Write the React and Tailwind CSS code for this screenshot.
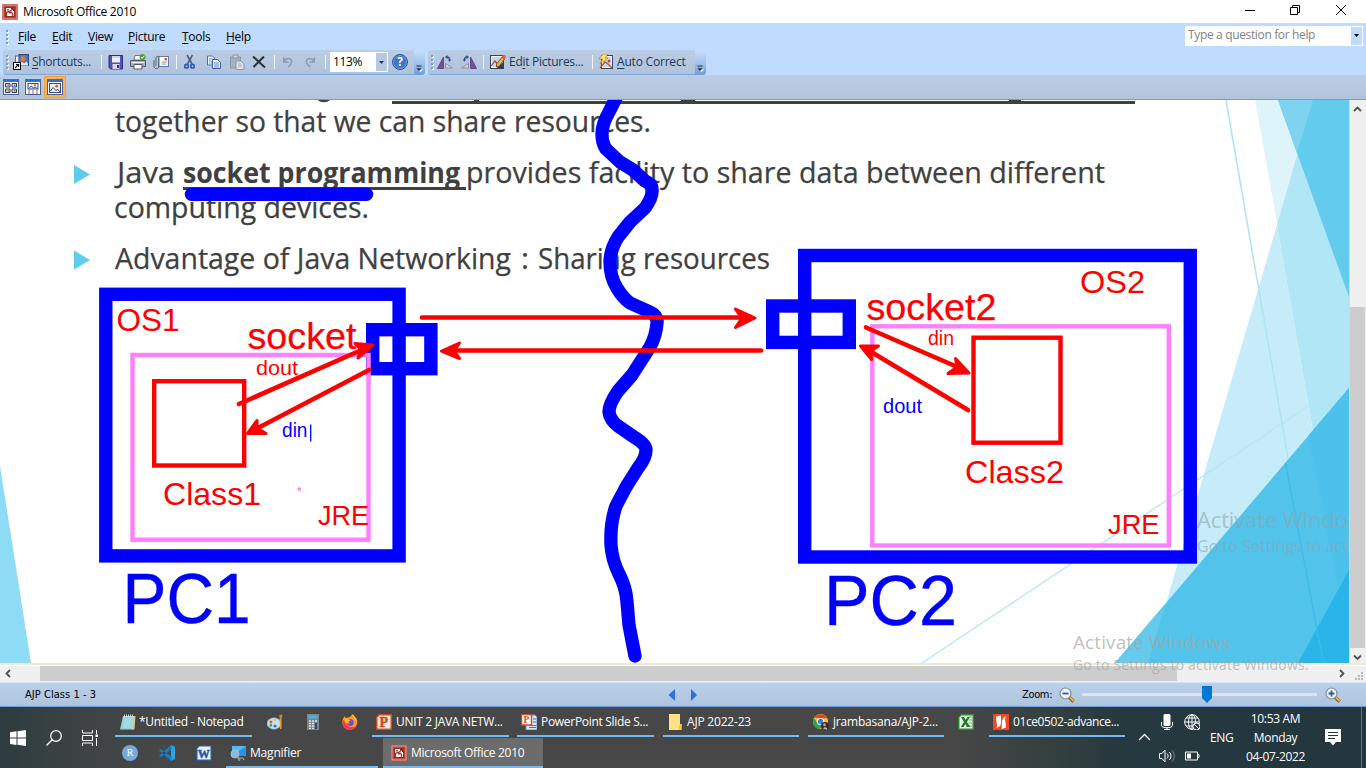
import React from "react";

const UI = "font-['Open_Sans','Noto_Sans',sans-serif]";
const ARIAL = "'Liberation Sans', Arial, sans-serif";
const TREB = "'Open Sans', 'Noto Sans', sans-serif";

function Icon({ children, className = "size-4", box = "0 0 16 16" }) {
  return (
    <svg viewBox={box} className={`shrink-0 ${className}`} fill="none">
      {children}
    </svg>
  );
}

/* ---------- application icons ---------- */

const PictureManager = () => (
  <Icon>
    <rect x="0" y="0" width="16" height="16" rx="1" fill="#b9473e" />
    <rect x="1" y="1" width="14" height="14" stroke="#e9a59d" />
    <rect x="3.5" y="3.5" width="9" height="9" fill="#fff" stroke="#8f2a22" />
    <path d="M4.500 12V8.500l2-1 1.500 1.500 1-1 1.500 1.500V12" stroke="#b5352b" strokeWidth="1.3" />
    <path d="M7 8l4-3.500" stroke="#b5352b" strokeWidth="1.300" />
    <circle cx="6" cy="5.700" r="1" fill="#b5352b" />
    <path d="M9 4.500h2.500V7" stroke="#7d1a14" />
  </Icon>
);

const Shortcuts = () => (
  <Icon>
    <rect x="2.5" y="2" width="9" height="9" fill="#e8eef8" stroke="#4f6fa8" />
    <rect x="6" y="0.5" width="9.500" height="11" fill="#4a76c0" stroke="#2b4c8c" />
    <circle cx="10" cy="4.500" r="2.600" fill="#e8763b" />
    <path d="M6 11l3-3.500 2 2 2.500-2L15 10v1.500H6z" fill="#dfe9f7" />
    <rect x="0.5" y="8.5" width="7" height="7" fill="#fff" stroke="#000" />
    <path d="M2 14l3.5-3.5M3 10.5h2.6v2.6" stroke="#000" strokeWidth="1.1" />
  </Icon>
);

const Save = () => (
  <Icon>
    <path d="M1 1.500h13.500v13.500H2.500L1 13.500z" fill="#5450b8" stroke="#312d86" />
    <rect x="4" y="2" width="8" height="6.500" fill="#eef1fb" />
    <path d="M4 3h8" stroke="#a9b7e6" />
    <rect x="4.500" y="10" width="7" height="5" fill="#d5d9ea" />
    <rect x="9" y="11" width="2" height="3" fill="#312d86" />
  </Icon>
);

const Print = () => (
  <Icon>
    <path d="M4 6l1-4.500h6L12 6z" fill="#fff" stroke="#777" />
    <path d="M.500 6.500h15v6H.5z" fill="#a8adb8" stroke="#555c68" />
    <path d="M1.500 8.500h13" stroke="#f3f4f6" />
    <path d="M4 10.500h8V15H4z" fill="#fff" stroke="#555c68" />
    <circle cx="12.500" cy="3" r="3" fill="#4f9e3f" />
    <path d="M11 3l1.200 1.300 2-2.500" stroke="#fff" />
  </Icon>
);

const Mail = () => (
  <Icon>
    <rect x="5.500" y="2.500" width="10" height="10" fill="#fdfdfe" stroke="#6279a8" />
    <rect x="11.500" y="4" width="2.500" height="2.500" fill="#d9642d" />
    <path d="M8.500 8h5M8.500 10h5" stroke="#7f95c0" />
    <path d="M1 6v6c0 3.500 5 3.500 5 0V4c0-2.300-3-2.300-3 0v7.500" stroke="#5b6472" />
  </Icon>
);

const Cut = () => (
  <Icon>
    <path d="M5 1l5 9M10.500 1l-5 9" stroke="#4f5f80" strokeWidth="1.600" />
    <circle cx="4.500" cy="12.200" r="1.800" stroke="#2858b4" strokeWidth="1.600" />
    <circle cx="10.500" cy="12.200" r="1.800" stroke="#2858b4" strokeWidth="1.600" />
  </Icon>
);

const Copy = () => (
  <Icon>
    <path d="M1.500 2h5l2 2v7h-7z" fill="#f4f8ff" stroke="#4a6cb3" />
    <path d="M3 5h4M3 7h4M3 9h4" stroke="#7b97d0" />
    <path d="M6.500 5.500h5l3 3v6h-8z" fill="#f4f8ff" stroke="#3a5ca6" />
    <path d="M8 9h5M8 11h5M8 13h5" stroke="#5e80c4" />
  </Icon>
);

const Paste = () => (
  <Icon>
    <path d="M1.500 3h10v11h-10z" fill="#a9b1bd" stroke="#8b94a3" />
    <rect x="4" y="1" width="5" height="3" fill="#cfd5de" stroke="#8b94a3" />
    <path d="M7 7h5l3 3v5.500H7z" fill="#dde3ec" stroke="#8f98a7" />
    <path d="M9 10h3M9 12h4" stroke="#a0a8b5" />
  </Icon>
);

const Flip = ({ right = false }) => (
  <Icon>
    <g transform={right ? "translate(16 0) scale(-1 1)" : undefined}>
      <path d="M6.500 3v11.500H.5z" fill="#7a4e9c" stroke="#5d3580" strokeWidth=".8" />
      <path d="M8.500 14V9.500L15.500 14z" fill="#d9dbe0" stroke="#8b8f98" />
      <path d="M9.500 3c2.500-.3 3 1 3 3" stroke="#2d4f92" strokeWidth="1.400" />
      <path d="M8 3l2.500-2v4.200zM10.800 5.500h3.600l-1.800 2.300z" fill="#2d4f92" />
    </g>
  </Icon>
);

const EditPic = () => (
  <Icon>
    <rect x="0.500" y="1.500" width="13" height="13" fill="#f2f5fa" stroke="#35455f" />
    <rect x="2" y="3" width="10" height="10" fill="#c5d5ed" />
    <path d="M1 12l4-5 2.500 3" stroke="#9c4a32" strokeWidth="1.200" />
    <path d="M13.500 8v6.500H6z" fill="#27405f" />
    <path d="M6.500 10L12 3l2.500 2L9.500 12l-3 1z" fill="#eeb04a" stroke="#5c3a12" strokeWidth=".8" />
    <circle cx="13.800" cy="3" r="2" fill="#d8603c" />
  </Icon>
);

const AutoPic = () => (
  <Icon>
    <rect x="3.500" y="1.500" width="11" height="13" fill="#f2f5fa" stroke="#35455f" />
    <rect x="5" y="3" width="8" height="10" fill="#c9d8ec" />
    <path d="M2 14l5-6 3 2 4 4" stroke="#b85a2c" strokeWidth="1.500" />
    <path d="M5 0h5L7 4h3L2 10l2.500-5H1z" fill="#ffe27a" stroke="#ad7a10" strokeWidth=".7" />
    <circle cx="11" cy="7" r="1.500" fill="#c2492e" />
  </Icon>
);

function ViewIcon({ kind }) {
  return (
    <Icon className="size-4">
      <rect x="0.500" y="1" width="15" height="14.500" fill="#fff" stroke="#51617d" />
      <rect x="0" y="0" width="16" height="3" fill="#2f70d6" />
      {kind === "grid" && (
        <>
          <path d="M2.500 4.500h4.500v3.500H2.500zM9 4.500h4.500v3.500H9zM2.500 10h4.500v3.500H2.500zM9 10h4.500v3.500H9z" fill="#c9d8ee" stroke="#1f4273" />
          <path d="M4.500 5.500H6V7H4.500zM11 5.500h1.500V7H11zM4.500 11H6v1.500H4.500zM11 11h1.500v1.500H11z" fill="#d9663a" />
        </>
      )}
      {kind === "film" && (
        <>
          <rect x="3" y="4.500" width="10" height="5.500" fill="#e9eef6" stroke="#384f74" />
          <path d="M4 9.500l2-2.500 2.500 2 1.500-1 2 1.500" stroke="#384f74" />
          <circle cx="10" cy="6.300" r="1" fill="#cf5d35" />
          <path d="M3 12h2M7 12h2M11 12h2M3 14h2M7 14h2M11 14h2" stroke="#7b59b0" />
        </>
      )}
      {kind === "single" && (
        <>
          <rect x="2.500" y="4.500" width="11" height="9" fill="#e9eef6" stroke="#384f74" />
          <path d="M3 12.500l3-4 3 3 1.500-1.500 2.500 3" stroke="#384f74" />
          <circle cx="9.700" cy="7.200" r="1.400" fill="#cf5d35" />
        </>
      )}
    </Icon>
  );
}

const Loupe = ({ plus = false }) => (
  <Icon>
    <path d="M10 10l4.500 4.500" stroke="#6b5420" strokeWidth="3.400" />
    <path d="M11 10.500l3.500 3.500" stroke="#eebd3c" strokeWidth="1.800" />
    <circle cx="6.500" cy="6.500" r="5.500" fill="#edf5fd" stroke="#7d8ca3" strokeWidth="1.200" />
    <path d={plus ? "M3.500 6.500h6M6.500 3.500v6" : "M3.500 6.500h6"} stroke="#35598f" strokeWidth="1.800" />
  </Icon>
);

const Notepad = () => (
  <Icon>
    <path d="M3 2h12l-1 13.500H0z" fill="#8ed2dc" />
    <path d="M14 2h1.500L14.500 15l-3 .8z" fill="#d9c48c" />
    <path d="M4 5h9M3.700 7h9M3.500 9h9M3.300 11h9M3 13h9" stroke="#c6edf2" strokeWidth=".7" />
    <path d="M4.500.5v3M6.500.5v3M8.500.5v3M10.500.5v3M12.500.5v3" stroke="#dce5e8" strokeWidth=".9" />
  </Icon>
);

const Paint = () => (
  <Icon>
    <ellipse cx="7" cy="9.500" rx="7" ry="5.800" fill="#bfe3f5" stroke="#6fa5c4" strokeWidth=".6" />
    <circle cx="4" cy="8" r="1.500" fill="#e0562f" />
    <circle cx="8" cy="6" r="1.400" fill="#f1c232" />
    <circle cx="3.800" cy="11.500" r="1.400" fill="#5aa53f" />
    <circle cx="8" cy="12" r="1.600" fill="#3b70c9" />
    <path d="M12 1l3.500-.5-.8 4.500h-1.800z" fill="#c6853b" />
    <path d="M12.500 5h2v10h-1.500z" fill="#e39a3a" />
  </Icon>
);

const Calculator = () => (
  <Icon>
    <rect x="2" y="0" width="12" height="16" fill="#7c858d" />
    <rect x="3.500" y="1.500" width="9" height="3" fill="#49b3e8" />
    <path d="M4 7h2M7 7h2M4 9.500h2M7 9.500h2M4 12h2M7 12h2M4 14.300h2M7 14.300h2M10 7h2" stroke="#dfe3e6" strokeWidth="1.300" />
    <path d="M11 9v6" stroke="#1f4f80" strokeWidth="2" />
  </Icon>
);

const Firefox = () => (
  <Icon>
    <path d="M8 3c1-1.500 2-2.500 3-3 0 1.500 2 2.500 3.500 4.500C17 9.500 13 16 8 16S-1 11 .7 5.500L2.500 2l1 2z" fill="#ff9a1f" />
    <path d="M.7 6C0 11 3 16 8 16c3.500 0 6-2 7-5-2 2.500-6 3-9 1S2.500 6 .7 6z" fill="#f2364f" />
    <circle cx="8.200" cy="8.500" r="3.500" fill="#7a45d8" />
    <path d="M3.500 4.500c3 0 4 1 5.500 2-2 0-3 1.500-1.500 3-3 .5-5-2-4-5z" fill="#ffb62e" />
    <path d="M10.500.5c0 2 3 4 3.500 7 .3-2-.5-4.500-3.500-7z" fill="#ffe14d" />
  </Icon>
);

const Letter = ({ ch, color, light }) => (
  <Icon>
    <path d="M3 0h13v16H0V3z" fill={color} />
    <path d="M3.500 1.500h11v13h-13V3.500z" fill={light} />
    <text x="7.800" y="13" textAnchor="middle" fontFamily="'Liberation Serif', serif" fontWeight="700" fontSize={ch === "W" ? 12 : 14} fill={color} stroke={color} strokeWidth=".5">
      {ch}
    </text>
  </Icon>
);

const SlideShow = () => (
  <Icon>
    <path d="M5 1h9l2 2v13H5z" fill="#dbe7f7" stroke="#6b8fc4" />
    <path d="M12 5h3M12 8h3M8 11.500h7M8 13.500h7" stroke="#3f72bb" />
    <rect x="0.500" y="0.500" width="10" height="10.500" fill="#fff" stroke="#d04a23" strokeWidth="1.500" />
    <text x="5.500" y="9" textAnchor="middle" fontFamily="'Liberation Serif', serif" fontWeight="700" fontSize="9.500" fill="#d04a23">P</text>
  </Icon>
);

const Folder = () => (
  <Icon>
    <path d="M2 0h11v10h1v6H2z" fill="#ffe185" />
    <path d="M13 10h1.800v6h-3V12z" fill="#f2c84b" />
  </Icon>
);

const Chrome = () => (
  <Icon>
    <circle cx="7.500" cy="7.500" r="7.500" fill="#f7c52b" />
    <path d="M1 3.800C4-1.300 11.500-1 14.300 4.200H7.500z" fill="#e63e30" />
    <path d="M1 3.800C-2 9 1.500 15 7 15l3.200-5.600L4.300 9z" fill="#2fa352" />
    <circle cx="7.500" cy="7.500" r="3.600" fill="#fff" />
    <circle cx="7.500" cy="7.500" r="2.700" fill="#3f7ee8" />
    <circle cx="12" cy="12" r="4" fill="#3b2d2b" />
    <circle cx="11.500" cy="10.700" r="1.500" fill="#c99679" />
    <path d="M10 15l1.500-2 2.500 1v1.500z" fill="#b7babd" />
  </Icon>
);

const Excel = () => (
  <Icon>
    <path d="M3 0h13v16H0V3z" fill="#2d8a35" />
    <path d="M3.500 1.500h11v13h-13V3.500z" fill="#e5f2df" />
    <path d="M10 3h4M10.500 6h3.500M10.500 9h3.500M10 12h4" stroke="#7ab46d" />
    <path d="M3 3h3l1.700 3L9.500 3h2.300L8.900 8l3.300 5H9L7.400 10 5.500 13H2.800L6 8z" fill="#217a2b" />
  </Icon>
);

const Nitro = () => (
  <Icon>
    <rect width="16" height="16" fill="#f04a23" />
    <path d="M3 2.500L8 1.500V9c0 3-2 4-4.500 5 1.500-3-.5-6-.5-11.500zM13 13.500L8.800 15V8.500c0-3 1.500-4.500 3.700-6.500C11.500 6 13 9 13 13.500z" fill="#fff" />
  </Icon>
);

const RStudio = () => (
  <Icon>
    <circle cx="8" cy="8" r="8" fill="#75aadb" />
    <text x="8" y="11.300" textAnchor="middle" fontFamily="'Liberation Serif', serif" fontSize="10" fill="#fff">R</text>
  </Icon>
);

const VSCode = () => (
  <Icon>
    <path d="M12 0l4 2v12l-4 2z" fill="#29a5ee" />
    <path d="M12 0L0 10.500 1.700 12 13 4zM12 16L0 5.500 1.700 4 13 12z" fill="#0f7ecb" />
  </Icon>
);

const Magnifier = () => (
  <Icon>
    <rect x="2" y="1" width="14" height="10" fill="#2196e8" />
    <path d="M2 11L16 1H2z" fill="#55bbf5" />
    <path d="M8 13h5l1 2" stroke="#9fb3c1" />
    <circle cx="5" cy="9" r="4" fill="#8fb8d2" stroke="#a4c0d2" />
    <path d="M7.500 12l2.300 3.700" stroke="#7f97a5" strokeWidth="2.200" />
  </Icon>
);

/* ---------- chrome ---------- */

const Sep = ({ className }) => <div className={`h-[14px] w-px shrink-0 bg-[#f1f6fd] ${className}`} />;
const Grip = ({ className = "" }) => (
  <div className={`flex w-[3px] shrink-0 flex-col gap-[2px] ${className}`}>
    {[0, 1, 2, 3].map((i) => (
      <div key={i} className="h-[2px] w-[2px] bg-[#6f9ddb] shadow-[1px_1px_0_#fff]" />
    ))}
  </div>
);
const Overflow = () => (
  <div className="flex w-[11px] shrink-0 flex-col items-center justify-end rounded-r-[3px] bg-linear-to-b from-[#c8deff] via-[#a5c3ec] to-[#6e9cdc] pb-[3px]">
    <Icon className="h-[7px] w-[7px]" box="0 0 7 7">
      <path d="M1 2h6M2 4.500h5L4.500 7z" stroke="none" fill="#fff" />
      <path d="M0.500 1h5" stroke="#1b2c4b" />
      <path d="M.5 3.200h5L3 6z" fill="#1b2c4b" />
    </Icon>
  </div>
);

function Menu({ k, rest, className }) {
  return (
    <div className={`shrink-0 ${className}`}>
      <span className="underline underline-offset-2">{k}</span>
      {rest}
    </div>
  );
}

function TitleBar() {
  return (
    <div className="flex h-[23px] shrink-0 items-center bg-white pl-[2px]">
      <PictureManager />
      <div className="ml-[5px] text-[12px] tracking-[-0.31px] text-black">Microsoft Office 2010</div>
      <svg className="ml-auto h-[23px] w-[121px]" viewBox="1245 0 121 23" fill="none" stroke="#000">
        <path d="M1245 10.500h10" />
        <path d="M1290.500 7.500h7v7h-7zM1292.500 7.500v-2h7v7h-2" />
        <path d="M1336 5l10 10M1346 5l-10 10" />
      </svg>
    </div>
  );
}

function MenuBar() {
  return (
    <div className="flex h-[27px] shrink-0 items-center pl-[6px] text-[12px] tracking-[-0.28px] text-black">
      <Grip className="mr-[9px]" />
      <Menu k="F" rest="ile" className="w-[34px]" />
      <Menu k="E" rest="dit" className="w-[36px]" />
      <Menu k="V" rest="iew" className="w-[40px]" />
      <Menu k="P" rest="icture" className="w-[54px]" />
      <Menu k="T" rest="ools" className="w-[44px]" />
      <Menu k="H" rest="elp" className="w-[40px]" />
      <div className="mt-[-2px] mr-[3px] ml-auto flex h-5 w-[178px] shrink-0 items-center bg-white pr-px pb-px pl-[3px] text-[12px] tracking-[-0.35px] text-[#838383]">
        <span>Type a question for help</span>
        <div className="mt-px ml-auto flex h-[18px] w-[11px] items-center justify-center bg-[#bfdbff]">
          <Icon className="h-[3px] w-[5px]" box="0 0 5 3"><path d="M0 0h5L2.500 3z" fill="#000" /></Icon>
        </div>
      </div>
    </div>
  );
}

function Toolbars() {
  return (
    <div className="flex h-[25px] shrink-0 pl-[3px] text-[12px] text-[#1e395b]">
      <div className="flex w-[411px] shrink-0 items-center rounded-l-[3px] border-b border-[#7ea6dc] bg-linear-to-b from-[#bbcde4] to-[#b0c3dc] pl-[3px]">
        <Grip className="mr-[4px]" />
        <Shortcuts />
        <div className="ml-[3px] w-[69px] shrink-0 tracking-[-0.34px]"><span className="underline underline-offset-2">S</span>hortcuts...</div>
        <Sep className="mr-[6px]" />
        <Save /><div className="w-[6px] shrink-0" />
        <Print /><div className="w-[7px] shrink-0" />
        <Mail /><div className="w-[7px] shrink-0" />
        <Sep className="mr-[5px]" />
        <Cut /><div className="w-[8px] shrink-0" />
        <Copy /><div className="w-[7px] shrink-0" />
        <Paste /><div className="w-[7px] shrink-0" />
        <Icon className="h-4 w-[14px]" box="0 0 14 16"><path d="M1 2.500l12 11M12 2.500L1.500 13" stroke="#2c3138" strokeWidth="2" /></Icon>
        <Sep className="ml-[8px] mr-[6px]" />
        <Icon className="h-4 w-[15px]"><path d="M3 3v5h5M3 8c3-6 10-4 8 1-.6 2-2 3-3.500 4" stroke="#8e9bb0" strokeWidth="1.800" /></Icon>
        <div className="w-[7px] shrink-0" />
        <Icon className="h-4 w-[15px]"><path d="M12 3v5H7M12 8C9 2 2 4 4 9c.6 2 2 3 3.500 4" stroke="#8e9bb0" strokeWidth="1.800" /></Icon>
        <Sep className="mr-[4px] ml-[7px]" />
        <div className="flex h-5 w-[58px] shrink-0 items-center bg-white pr-px pl-[3px] tracking-[-0.35px] text-black">
          113%
          <div className="ml-auto flex h-[18px] w-[11px] items-center justify-center bg-[#b5c9e2]">
            <Icon className="h-[3px] w-[5px]" box="0 0 5 3"><path d="M0 0h5L2.500 3z" fill="#1e395b" /></Icon>
          </div>
        </div>
        <Icon className="ml-1 size-4">
          <circle cx="8" cy="8" r="7.500" fill="#3f74c6" stroke="#2c5499" />
          <circle cx="8" cy="8" r="6.500" stroke="#86aee6" strokeWidth=".7" />
          <text x="8" y="12.300" textAnchor="middle" fontFamily={TREB} fontWeight="700" fontSize="12" fill="#fff">?</text>
        </Icon>
      </div>
      <Overflow />
      <div className="ml-[3px] flex w-[267px] shrink-0 items-center rounded-l-[3px] border-b border-[#7ea6dc] bg-linear-to-b from-[#bbcde4] to-[#b0c3dc] pl-[3px]">
        <Grip className="mr-[3px]" />
        <Flip /><div className="w-[8px] shrink-0" />
        <Flip right />
        <Sep className="mr-[6px] ml-[6px]" />
        <EditPic />
        <div className="ml-[3px] w-[83px] shrink-0 tracking-[-0.28px]">Ed<span className="underline underline-offset-2">i</span>t Pictures...</div>
        <Sep className="mr-[5px]" />
        <AutoPic />
        <div className="ml-[3px] shrink-0 tracking-[-0.2px]"><span className="underline underline-offset-2">A</span>uto Correct</div>
      </div>
      <Overflow />
    </div>
  );
}

function ViewBar() {
  return (
    <div className="flex h-[25px] shrink-0 items-center border-b border-[#6f9ddb] bg-linear-to-b from-[#bbcde4] to-[#b0c4dc] pl-[3px]">
      <ViewIcon kind="grid" />
      <div className="w-[6px]" />
      <ViewIcon kind="film" />
      <div className="ml-[3px] flex h-[22px] w-[22px] items-center justify-center border border-[#f5a03a] bg-[#ffb24f]">
        <ViewIcon kind="single" />
      </div>
    </div>
  );
}

/* ---------- slide ---------- */

function Label({ x, y, w, size, fill = "#ff0000", font = ARIAL, weight = 400, heavy = 0, children }) {
  return (
    <text
      x={x}
      y={y}
      textLength={w}
      lengthAdjust="spacingAndGlyphs"
      fontFamily={font}
      fontSize={size}
      fontWeight={weight}
      fill={fill}
      stroke={heavy ? fill : "none"}
      strokeWidth={heavy}
    >
      {children}
    </text>
  );
}

const Arrow = ({ line, head }) => (
  <g stroke="#ff0000" strokeLinejoin="round" strokeLinecap="round">
    <path d={line} strokeWidth="4.600" />
    <path d={head} fill="#ff0000" strokeWidth="3" />
  </g>
);

function Slide() {
  const ink = "#404040";
  return (
    <svg className="h-[563px] w-[1349px] shrink-0 bg-white" viewBox="0 100 1349 563" fill="none">
      <path d="M1255 100H1349V663L1278 228z" fill="#ddf4fb" />
      <path d="M1277 225L1148.500 663H1349V640z" fill="#c5ecf8" />
      <path d="M1313 100L1277 225L1354 663V100z" fill="#b0e6f6" />
      <path d="M1278 100H1349V297z" fill="#63cbec" />
      <path d="M1278 100H1313L1297 153z" fill="#7dd3f0" />
      <path d="M1226 100L1323.500 663" stroke="#ade3f6" strokeWidth="1.500" />
      <path d="M1349 379L922 663" stroke="#b5e6f7" strokeWidth="1.300" />
      <path d="M1349 388L1115 663H1349z" fill="#52c4eb" />
      <path d="M1115 663L1165 604L1148.500 663z" fill="#66caed" />
      <path d="M1349 388L1308 436L1349 640z" fill="#4bc1eb" />
      <path d="M1349 570L1298 663H1349z" fill="#29b5e7" />
      <path d="M1285.500 463L1323.500 663" stroke="#3ebbe8" strokeWidth="1.300" />
      <path d="M0 466L31 663H0z" fill="#8edbf6" />

      <g fill={ink}>
        <rect x="392" y="101" width="743" height="3" />
        <path d="M318 100c2 3 9 3 12 0z" />
        <rect x="474" y="99.500" width="5" height="2" />
        <rect x="681" y="99.500" width="14" height="2" />
        <rect x="1009" y="99.500" width="12" height="2" />
        <rect x="183" y="187" width="283" height="3" />
      </g>
      <path d="M74 165v19l16-9.500zM74 250.500v19l16-9.500z" fill="#5fcbef" />
      <g stroke={ink} strokeWidth=".25">
        <Label x={115} y={131.500} w={536} size={29.500} fill={ink} font={TREB} heavy={0.25}>together so that we can share resources.</Label>
        <Label x={117} y={182.500} w={58} size={29.500} fill={ink} font={TREB} heavy={0.25}>Java</Label>
        <Label x={183} y={182.500} w={277} size={29} fill={ink} font={TREB} weight={700}>socket programming</Label>
        <Label x={466} y={182.500} w={639} size={29.500} fill={ink} font={TREB} heavy={0.25}>provides facility to share data between different</Label>
        <Label x={114} y={218} w={255} size={29.500} fill={ink} font={TREB} heavy={0.25}>computing devices.</Label>
        <Label x={115} y={268.500} w={396} size={29.500} fill={ink} font={TREB} heavy={0.25}>Advantage of Java Networking</Label>
        <Label x={521} y={268.500} w={8} size={29.500} fill={ink} font={TREB} heavy={0.25}>:</Label>
        <Label x={538} y={268.500} w={232} size={29.500} fill={ink} font={TREB} heavy={0.25}>Sharing resources</Label>
      </g>

      <Label x={1197} y={527.500} w={151} size={21.500} fill="#8fa3ab99" font={TREB}>Activate Windo</Label>
      <Label x={1197} y={551.500} w={151} size={16} fill="#8fa3ab99" font={TREB}>Go to Settings to act</Label>

      <path
        d="M616 98L609 112Q602 124 602 134Q602 143 606 149L620 162L633 170L645 181Q653 184 652 192Q652 198 645 208L630 222L618 237Q610 250 610 262Q610 277 617 288Q622 297 630 303L650 312Q658 316 657 323Q656 336 650 347L632 375L618 391Q609 404 609 412Q610 420 618 426L634 437Q646 444 646 450Q646 458 638 468L626 487L616 506Q610 523 611 545Q612 560 619 574Q626 587 627 602L629 625L635 656"
        stroke="#0000ff"
        strokeWidth="13.300"
        strokeLinecap="round"
        strokeLinejoin="round"
      />
      <path d="M191.500 194.300H366.500" stroke="#0000ff" strokeWidth="13.400" strokeLinecap="round" />

      <g stroke="#0000ff" strokeWidth="13.400">
        <rect x="105.800" y="294.300" width="293.300" height="261.600" />
        <rect x="372.700" y="329.700" width="58.200" height="39" />
        <rect x="804.700" y="255.500" width="385.600" height="301.500" />
        <rect x="772.700" y="306" width="76.600" height="36.400" />
      </g>
      <g stroke="#ff80ff" strokeWidth="4.400">
        <rect x="132.500" y="355" width="236" height="184.700" />
        <rect x="872.300" y="326.300" width="296.500" height="219.200" />
      </g>
      <rect x="297.500" y="487.500" width="3.500" height="3" fill="#ff80ff" />
      <g stroke="#ff0000" strokeWidth="4.400">
        <rect x="154.200" y="381.200" width="90" height="84.300" />
        <rect x="973.500" y="337.700" width="87" height="105" />
      </g>

      <Label x={116.500} y={331} w={63} size={31.500}>OS1</Label>
      <Label x={247.500} y={349} w={109} size={37} heavy={0.25}>socket</Label>
      <Label x={256} y={375} w={42} size={20.500}>dout</Label>
      <Label x={282} y={437} w={25.500} size={20.500} fill="#0000ff">din</Label>
      <path d="M310.700 424.500v17" stroke="#0000ff" strokeWidth="1.300" />
      <Label x={163} y={505} w={98} size={31.500}>Class1</Label>
      <Label x={318} y={525} w={51} size={27}>JRE</Label>
      <Label x={122.500} y={622.800} w={128} size={70} fill="#0000ff" heavy={0.4}>PC1</Label>

      <Label x={1080} y={292.500} w={65} size={31.500}>OS2</Label>
      <Label x={866.500} y={320} w={130} size={37} heavy={0.25}>socket2</Label>
      <Label x={928} y={345} w={26} size={20.500}>din</Label>
      <Label x={883} y={413} w={39} size={20.500} fill="#0000ff">dout</Label>
      <Label x={965} y={482.500} w={99} size={31.500}>Class2</Label>
      <Label x={1108} y={534} w={51.500} size={27}>JRE</Label>
      <Label x={824} y={625.300} w={133} size={70} fill="#0000ff" heavy={0.4}>PC2</Label>

      <Arrow line="M422 317.500H745" head="M755 318L735.500 309L742 318L735.500 327.500z" />
      <Arrow line="M761 350.500H450" head="M441.500 351L459.500 343L454 351L459.500 358.500z" />
      <Arrow line="M239 404L366 348" head="M373 345L355 343.500L361 349.500L358 358z" />
      <Arrow line="M369 370L254 430" head="M247.500 433.500L257 420.500L257 428L266 433.500z" />
      <Arrow line="M866 327.500L962 369" head="M969 373L955.500 358.500L957 367L948 373.500z" />
      <Arrow line="M968 410L868 350" head="M860.500 346L878.500 346L871 351L871.500 359.500z" />
    </svg>
  );
}

const Chevron = ({ d }) => (
  <Icon className="size-[9px]" box="0 0 9 9"><path d={d} stroke="#505050" strokeWidth="1.800" /></Icon>
);

function Workspace() {
  return (
    <div className="flex h-[563px] shrink-0">
      <Slide />
      <div className="ml-px flex w-4 flex-col items-center bg-[#f0f0f0]">
        <div className="flex h-[17px] w-full shrink-0 items-center justify-center pr-[2px]"><Chevron d="M1 7L4.500 3.500 8 7" /></div>
        <div className="mt-[190px] mr-px w-[15px] grow bg-[#cdcdcd]" />
        <div className="flex h-[15px] w-full shrink-0 items-end justify-center pr-[2px]"><Chevron d="M1 1.500L4.500 5 8 1.500" /></div>
      </div>
    </div>
  );
}

function HorizontalScroll() {
  return (
    <div className="flex h-[19px] shrink-0 flex-col bg-[#f0f0f0]">
      <div className="h-[2px] shrink-0 bg-[#ece9d8]" />
      <div className="h-px shrink-0 bg-white" />
      <div className="flex h-[15px] shrink-0 items-center">
        <div className="w-10 pl-[4px]"><Chevron d="M6 1L2.500 4.500 6 8" /></div>
        <div className="h-full w-[1137px] bg-[#cdcdcd]" />
        <div className="ml-auto mr-[9px]"><Chevron d="M3 1l3.500 3.500L3 8" /></div>
        <Icon className="size-[9px] mt-[6px] mr-[2px]" box="0 0 9 9">
          <path d="M6 0h2v2H6zM3 3h2v2H3zM6 3h2v2H6zM0 6h2v2H0zM3 6h2v2H3zM6 6h2v2H6z" fill="#b8b8b8" />
        </Icon>
      </div>
    </div>
  );
}

function StatusBar() {
  return (
    <div className="flex h-[25px] shrink-0 items-center border-t border-b border-t-[#d5e5fb] border-b-[#6f9ddb] bg-linear-to-b from-[#bbd0ea] to-[#aec3dc] text-[11px] text-black">
      <div className="w-[667px] pl-[25px] tracking-[0.05px] font-['DejaVu_Sans_Condensed','Noto_Sans',sans-serif]">AJP Class 1 - 3</div>
      <svg viewBox="0 0 30 12" className="h-3 w-[30px]">
        <path d="M8 0v12L1.500 6z" fill="#2b6fe0" />
        <path d="M24 0v12l6-6z" fill="#2b6fe0" />
      </svg>
      <div className="ml-[325px] w-[37px] tracking-[-0.35px] font-['DejaVu_Sans_Condensed','Noto_Sans',sans-serif]">Zoom:</div>
      <Loupe />
      <div className="ml-[7px] flex h-full w-[235px] items-center">
        <div className="h-[3px] w-[120px] bg-[#dde3e8]" />
        <svg viewBox="0 0 10 17" className="h-[17px] w-[10px] shrink-0"><path d="M0 0h10v12l-5 5-5-5z" fill="#0078d7" /></svg>
        <div className="h-[3px] grow bg-[#dde3e8]" />
      </div>
      <div className="w-[8px]" />
      <Loupe plus />
    </div>
  );
}

/* ---------- taskbar ---------- */

function Task({ icon, label, className, gap = "gap-[4px]", tracking = "tracking-[-0.2px]" }) {
  return (
    <div className={`flex h-[30px] shrink-0 items-center border-b-2 border-[#76b9ed] pt-px ${gap} ${className}`}>
      {icon}
      <span className={`whitespace-nowrap ${tracking}`}>{label}</span>
    </div>
  );
}

const Pin = ({ children, className = "w-[37px]" }) => (
  <div className={`flex h-[30px] shrink-0 items-center justify-center pb-px ${className}`}>{children}</div>
);

function Taskbar() {
  return (
    <div className="flex h-[61px] shrink-0 text-[12px] text-white [background-image:linear-gradient(90deg,#2d3c40_0%,#3c4243_5%,#474747_12%,#474747_70%,#35403f_77%,#26393f_82%,#24363d_100%)]">
      <div className="flex w-[115px] shrink-0 items-center pl-[10px]">
        <Icon><path d="M0 2.300L6.500 1.300V7.600H0zM7.500 1.200L16 0V7.600H7.500zM0 8.600h6.500v6.300L0 14zM7.500 8.600H16V16l-8.500-1.200z" fill="#fff" /></Icon>
        <Icon className="ml-[20px] size-4"><circle cx="10" cy="6" r="5.300" stroke="#fff" strokeWidth="1.200" /><path d="M6.200 9.800L.5 15.500" stroke="#fff" strokeWidth="1.300" /></Icon>
        <Icon className="ml-[20px] h-4 w-[17px]" box="0 0 17 16"><path d="M.5 0v3h10V0M.5 16v-3h10v3M.5 5.500h10v5H.5zM14.500 0v4M14.500 8v8" stroke="#fff" /><path d="M13.500 4.500h2.500v2.500h-2.500z" fill="#fff" /></Icon>
      </div>
      <div className="flex w-[1015px] shrink-0 flex-col">
        <div className="flex h-[31px] shrink-0">
          <Task icon={<Notepad />} label="*Untitled - Notepad" className="w-[137px] pl-[5px]" gap="gap-[3px]" tracking="tracking-[-0.3px]" />
          <Pin className="ml-[4px] w-[38px]"><Paint /></Pin>
          <Pin><Calculator /></Pin>
          <Pin><Firefox /></Pin>
          <Task icon={<Letter ch="P" color="#d04a1e" light="#fbe9e2" />} label="UNIT 2 JAVA NETW..." className="ml-[4px] w-[137px] pl-[4px]" tracking="tracking-[-0.3px]" />
          <Task icon={<SlideShow />} label="PowerPoint Slide S..." className="ml-2 w-[137px] pl-[4px]" tracking="tracking-[-0.3px]" />
          <Task icon={<Folder />} label="AJP 2022-23" className="ml-[9px] w-[136px] pl-[4px]" />
          <Task icon={<Chrome />} label="jrambasana/AJP-2..." className="ml-[9px] w-[136px] pl-[5px]" />
          <Pin className="ml-[3px] w-[38px]"><Excel /></Pin>
          <Task icon={<Nitro />} label="01ce0502-advance..." className="ml-[4px] w-[136px] pl-[4px]" tracking="tracking-[-0.4px]" />
        </div>
        <div className="flex h-[30px] shrink-0">
          <Pin className="-ml-[4px] w-[37px]"><RStudio /></Pin>
          <Pin><VSCode /></Pin>
          <Pin><Letter ch="W" color="#2b579a" light="#e9f0fa" /></Pin>
          <Task icon={<Magnifier />} label="Magnifier" className="ml-[4px] w-[152px] pl-[4px]" />
          <Task icon={<PictureManager />} label="Microsoft Office 2010" className="ml-[5px] w-[160px] bg-[#6c6c6c] pl-[8px]" tracking="tracking-[-0.3px]" />
        </div>
      </div>
      <div className="flex grow pl-[8px]">
        <Icon className="mt-[26px] h-[8px] w-[13px]" box="0 0 13 8"><path d="M1 7l5.500-5.500L12 7" stroke="#fff" strokeWidth="1.300" /></Icon>
        <div className="ml-[8px] grid shrink-0 grid-cols-2 grid-rows-2 gap-x-[9px] gap-y-[14px] pt-[7px]">
          <Icon><rect x="4.500" y="0" width="7" height="12" rx="1.500" fill="#fff" /><path d="M2.500 8v3.500c0 3 11 3 11 0V8M8 13v3M5 15.500h6" stroke="#fff" /></Icon>
          <Icon><circle cx="8" cy="8" r="7.300" stroke="#fff" /><ellipse cx="8" cy="8" rx="3.500" ry="7.300" stroke="#fff" /><path d="M.7 8h14M2 4h12M2 12h12M8 .7v14.600" stroke="#fff" /><circle cx="12.500" cy="12.500" r="3.500" fill="#25373e" stroke="#fff" /><path d="M10.200 10.200l4.600 4.600" stroke="#fff" /></Icon>
          <Icon><path d="M.5 5.500h2.500l3-3.500v12L3 10.500H.5zM8 5.500c1.500 1.500 1.500 3.500 0 5M10.300 4c2.300 2.500 2.300 5.500 0 8" stroke="#fff" /><path d="M13 2.500c3 3.500 3 7.500 0 11" stroke="#7d8a8e" /></Icon>
          <Icon><path d="M1.500 4h12v8h-12zM13.500 6.500h1.500v3h-1.500" stroke="#fff" /><rect x="3" y="5.500" width="4" height="5" fill="#fff" /></Icon>
        </div>
        <div className="ml-[10px] flex w-[26px] shrink-0 items-center tracking-[-0.3px]">ENG</div>
        <div className="ml-[5px] flex w-[69px] shrink-0 flex-col items-center pt-[2px] leading-[19px] tracking-[-0.35px]">
          <span>10:53 AM</span><span>Monday</span><span>04-07-2022</span>
        </div>
        <Icon className="mt-[22px] ml-[15px] h-[17px] w-4" box="0 0 16 17"><path d="M0 0h16v13h-5l-3 3.500L5 13H0z" fill="#fff" /><path d="M3 3.500h10M3 6.500h10M3 9.500h7" stroke="#24363d" /></Icon>
        <div className="mr-[4px] ml-auto w-px bg-[#66757a]" />
      </div>
    </div>
  );
}

export default function App() {
  return (
    <div className={`relative flex h-[768px] w-[1366px] flex-col overflow-hidden bg-[#bfdbff] leading-none ${UI}`}>
      <TitleBar />
      <MenuBar />
      <Toolbars />
      <ViewBar />
      <Workspace />
      <HorizontalScroll />
      <StatusBar />
      <Taskbar />
      <div className="pointer-events-none absolute top-[632px] left-[1073px] flex flex-col gap-[6px] whitespace-nowrap text-[#a5a5a5b5]">
        <span className="text-[19px] leading-[20px] tracking-[0.1px]">Activate Windows</span>
        <span className="text-[14px] leading-[14px] tracking-[0.18px]">Go to Settings to activate Windows.</span>
      </div>
    </div>
  );
}
